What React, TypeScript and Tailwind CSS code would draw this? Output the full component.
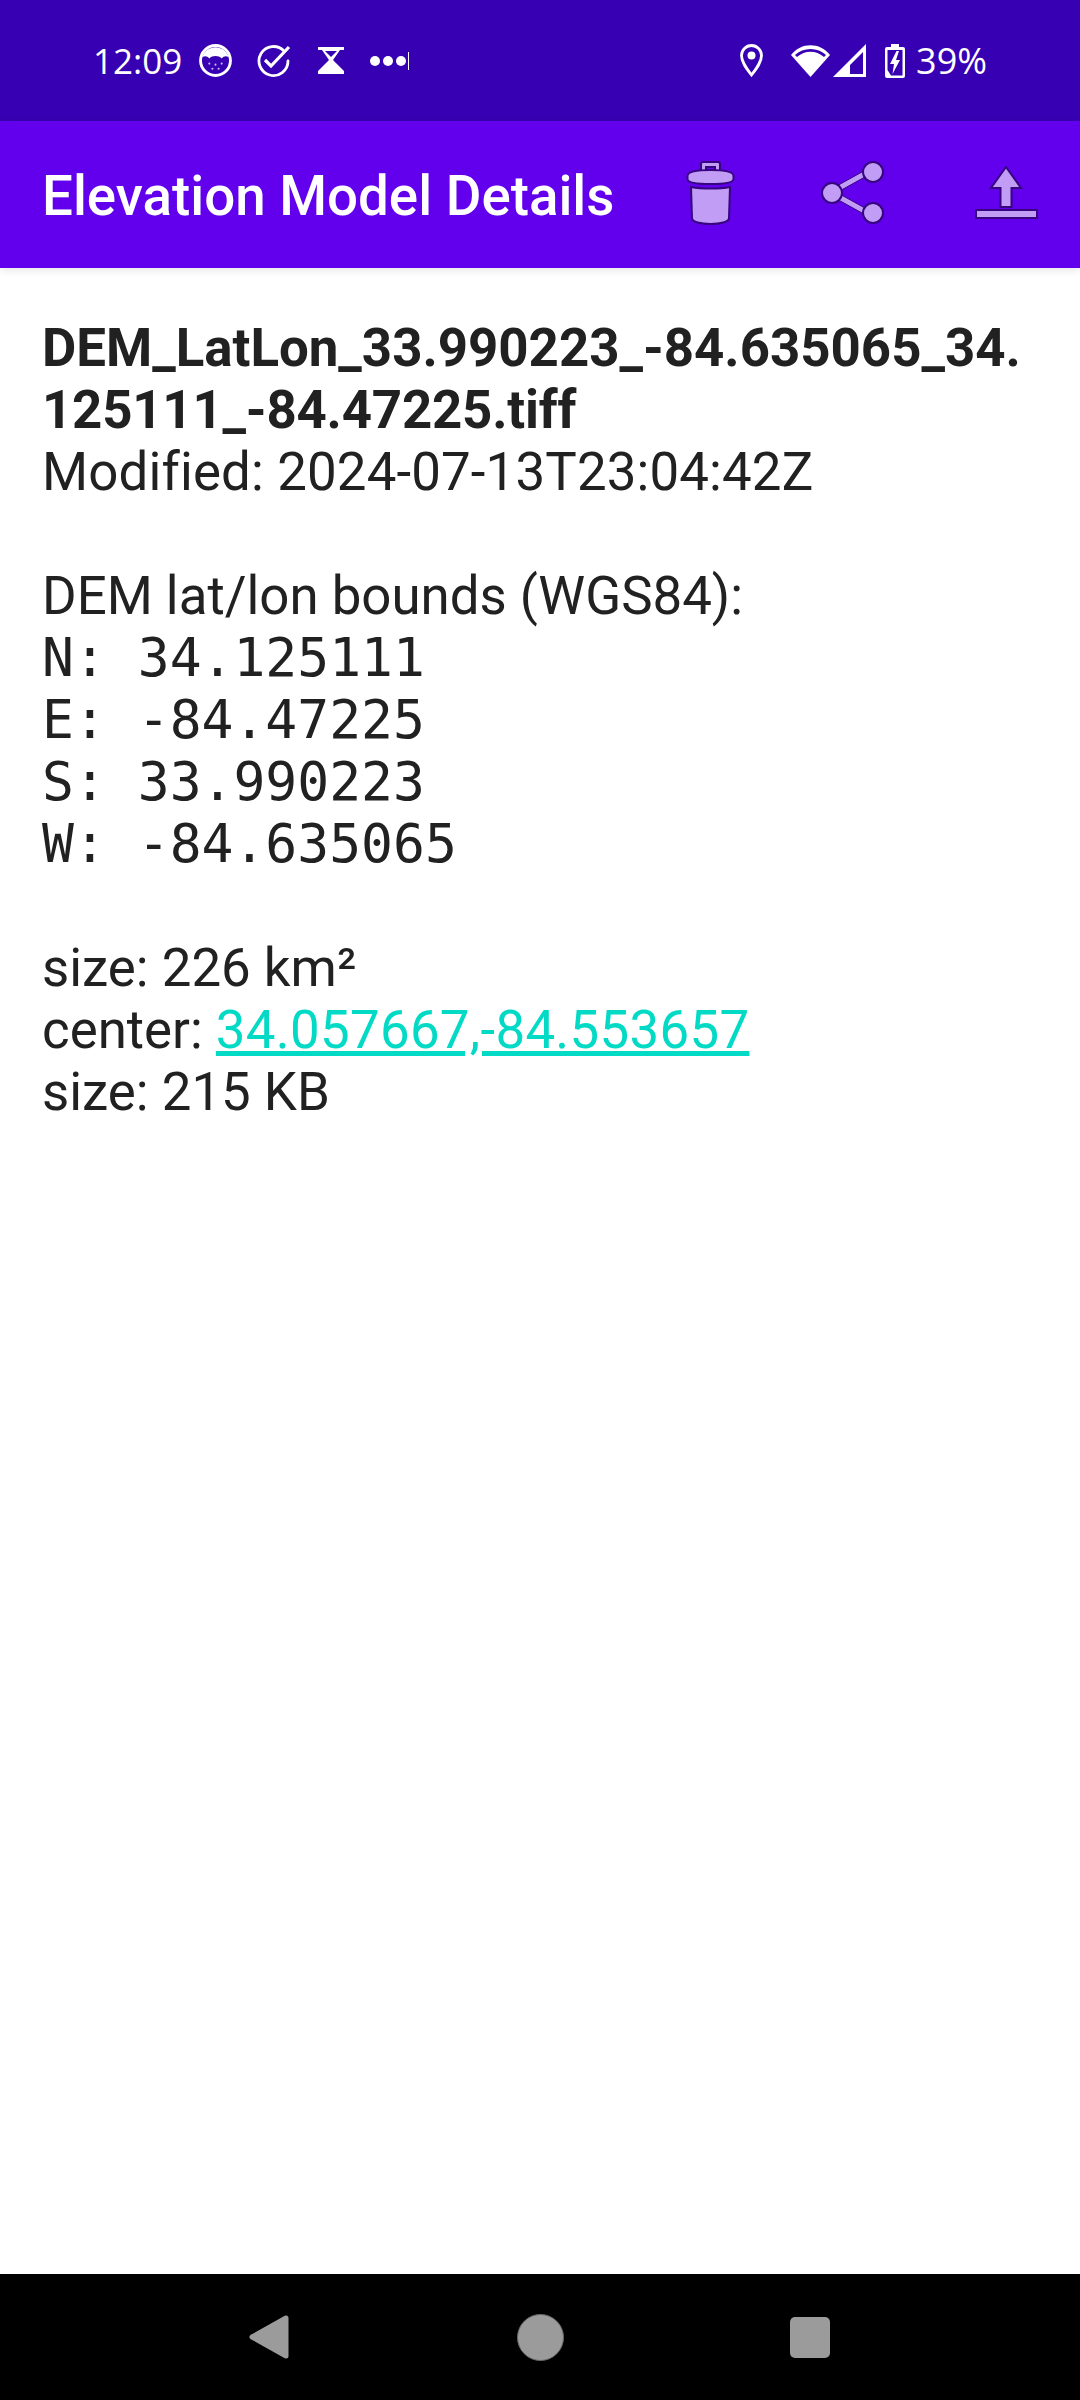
import React from "react";

const StatusIcons = () => (
  <div className="flex items-center">
    {/* cat face */}
    <svg width="33" height="33" viewBox="0 0 32 32" className="ml-[17px]">
      <circle cx="16" cy="16" r="14.500" fill="none" stroke="#fff" strokeWidth="2.800" />
      <path d="M3 13 C7 0 25 0 29 13 C26 11 24 12 22 14 C19 11 13 11 10 14 C8 12 6 11 3 13 Z" fill="#fff" />
      <circle cx="10" cy="19" r="1" fill="#cbb8ee" />
      <circle cx="16" cy="20" r="1" fill="#cbb8ee" />
      <circle cx="22" cy="19" r="1" fill="#cbb8ee" />
      <circle cx="13" cy="24" r="1" fill="#cbb8ee" />
      <circle cx="19" cy="24" r="1" fill="#cbb8ee" />
    </svg>
    {/* check circle */}
    <svg width="34" height="32" viewBox="0 0 34 32" className="ml-[25px]">
      <path d="M27 6 A14.500 14.500 0 1 0 31 16" fill="none" stroke="#fff" strokeWidth="2.800" strokeLinecap="round" />
      <path d="M8 15 L14 21 L32 2" fill="none" stroke="#fff" strokeWidth="3.200" />
    </svg>
    {/* hourglass */}
    <svg width="26" height="27" viewBox="0 0 26 27" className="ml-[27px]">
      <path d="M0 0 H26 V3 H22 L15 13 L26 24 V27 H0 V24 L11 13 L4 3 H0 Z" fill="#fff" />
      <path d="M7 4 H19 L13 10 Z" fill="#3700b3" />
    </svg>
    {/* more notifications */}
    <svg width="39" height="20" viewBox="0 0 39 20" className="ml-[26px]">
      <circle cx="5" cy="10" r="5" fill="#fff" />
      <circle cx="18" cy="10" r="5" fill="#fff" />
      <circle cx="31" cy="10" r="5" fill="#fff" />
      <rect x="38" y="1" width="1" height="18" fill="#fff" />
    </svg>
  </div>
);

const SystemIcons = () => (
  <div className="flex items-center">
    <svg width="23" height="33" viewBox="0 0 23 33">
      <path d="M11.500 31 C6 24 1.500 18 1.500 11.500 A10 10 0 0 1 21.500 11.500 C21.500 18 17 24 11.500 31 Z" fill="none" stroke="#fff" strokeWidth="2.800" />
      <circle cx="11.500" cy="11.500" r="4" fill="#fff" />
    </svg>
    <svg width="39" height="33" viewBox="0 0 39 33" className="ml-[28px]">
      <path d="M19.500 33 L0 11 C10 -2 29 -2 39 11 Z" fill="#fff" />
      <path d="M4 11 C12 3 27 3 35 11 L33 13 C25 6 14 6 6 13 Z" fill="#3700b3" />
    </svg>
    <svg width="33" height="33" viewBox="0 0 33 33" className="ml-[3px]">
      <path d="M33 0 V33 H0 Z M30 8 L17 21 V30 H30 Z" fill="#fff" fillRule="evenodd" />
    </svg>
    <svg width="20" height="34" viewBox="0 0 20 34" className="ml-[19px]">
      <path d="M6 0 H14 V3 H18 A2 2 0 0 1 20 5 V32 A2 2 0 0 1 18 34 H2 A2 2 0 0 1 0 32 V5 A2 2 0 0 1 2 3 H6 Z M2.500 6 V26 L6 31.500 H17.500 V6 Z" fill="#fff" fillRule="evenodd" />
      <path d="M11.500 7 L5 20 H9 L7.500 30 L15 16 H11 L14 7 Z" fill="#fff" />
    </svg>
    <span className="ml-[11px] text-[36px] font-medium leading-none text-white font-['Open_Sans',sans-serif]">39%</span>
  </div>
);

const ActionIcons = () => (
  <div className="mb-[3px] flex items-center">
    <svg width="49" height="66" viewBox="0 0 49 66" fill="#c29df5" stroke="#37057f" strokeWidth="2">
      <path d="M15 12 V4 A2 2 0 0 1 17 2 H32 A2 2 0 0 1 34 4 V12 H29 V7 H20 V12 Z" />
      <path d="M1.500 16 C1.500 11 12 10 24.500 10 C37 10 47.500 11 47.500 16 V19 C47.500 23 37 24 24.500 24 C12 24 1.500 23 1.500 19 Z" />
      <path d="M5 27 C15 29 34 29 44 27 L43 58 C43 62 34 64 24.500 64 C15 64 6 62 6 58 Z" />
    </svg>
    <svg width="64" height="66" viewBox="0 0 64 66" className="ml-[86px]" fill="#c29df5" stroke="#37057f" strokeWidth="2">
      <path d="M12 28 L50 7 L53 12 L15 33 Z" strokeWidth="1" />
      <path d="M12 37 L50 58 L53 53 L15 32 Z" strokeWidth="1" />
      <circle cx="52" cy="12" r="10" />
      <circle cx="11" cy="33" r="10" />
      <circle cx="52" cy="53" r="10" />
    </svg>
    <svg width="63" height="54" viewBox="0 0 63 54" className="ml-[90px]" fill="#c29df5" stroke="#37057f" strokeWidth="2">
      <path d="M31 1 L46 22 H36.500 V41 H25.500 V22 H16 Z" />
      <rect x="1" y="44" width="61" height="8" />
    </svg>
  </div>
);

const NavBar = () => (
  <div className="flex h-[126px] w-full items-center bg-black pl-[249px]">
    <svg width="41" height="44" viewBox="0 0 41 44">
      <path d="M3 22 L37 3 V41 Z" fill="#9b9b9b" stroke="#9b9b9b" strokeWidth="5" strokeLinejoin="round" />
    </svg>
    <div className="ml-[227px] h-[47px] w-[47px] rounded-full border border-[#6a6a6a] bg-[#9b9b9b]" />
    <div className="ml-[226px] h-[41px] w-[40px] rounded-[5px] bg-[#9b9b9b]" />
  </div>
);

export default function App() {
  return (
    <div className="flex h-[2400px] w-[1080px] flex-col overflow-hidden bg-white font-['Roboto',sans-serif]">
      <div className="flex h-[121px] items-center justify-between bg-[#3700b3] pl-[93px] pr-[93px]">
        <div className="flex items-center">
          <span className="text-[35px] font-medium leading-none text-white font-['Open_Sans',sans-serif]">12:09</span>
          <StatusIcons />
        </div>
        <SystemIcons />
      </div>
      <div className="relative flex h-[147px] items-center justify-between bg-[#6200ee] pl-[42px] pr-[42px] shadow-[0_2px_8px_rgba(0,0,0,0.1)]">
        <h1 className="mt-[3px] text-[54.7px] font-medium leading-none text-white">Elevation Model Details</h1>
        <ActionIcons />
      </div>
      <main className="flex-1 px-[42px] pt-[49px] text-[52.8px] leading-[62px] text-[#212121]">
        <p className="font-bold break-all">
          DEM_LatLon_33.990223_-84.635065_34.<span className="tracking-[-0.2px]">125111_-84.47225.tiff</span>
        </p>
        <p className="tracking-[0.15px]">Modified: 2024-07-13T23:04:42Z</p>
        <p className="h-[62px]" />
        <p>DEM lat/lon bounds (WGS84):</p>
        <div className="text-[53px] font-['DejaVu_Sans_Mono',monospace]">
          <p>N: 34.125111</p>
          <p>E: -84.47225</p>
          <p>S: 33.990223</p>
          <p>W: -84.635065</p>
        </div>
        <p className="h-[62px]" />
        <p>size: 226 km²</p>
        <p>
          center: <a className="tracking-[0.3px] text-[#03dac5] underline">34.057667,-84.553657</a>
        </p>
        <p>size: 215 KB</p>
      </main>
      <NavBar />
    </div>
  );
}
